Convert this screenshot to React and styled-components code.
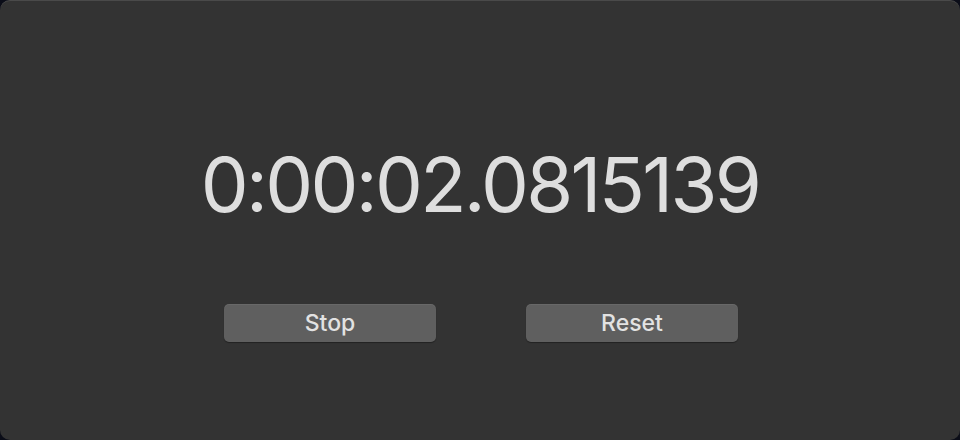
import React from 'react';
import styled, { createGlobalStyle } from 'styled-components';

const GlobalStyle = createGlobalStyle`
  html, body {
    margin: 0;
    padding: 0;
    background: #0b0d18;
  }
  #root {
    width: 960px;
    height: 440px;
  }
`;

const Window = styled.div`
  box-sizing: border-box;
  width: 960px;
  height: 440px;
  background-color: #333333;
  border-radius: 10px;
  border-top: 1px solid #4a4a4a;
  display: flex;
  flex-direction: column;
  align-items: center;
  padding-top: 138px;
  font-family: Inter, "Liberation Sans", sans-serif;
`;

const Time = styled.div`
  font-size: 76px;
  line-height: 90px;
  color: #dedede;
  letter-spacing: -2.7px;
`;

const Buttons = styled.div`
  display: flex;
  gap: 90px;
  margin-top: 75px;
  margin-left: 2px;
`;

const Button = styled.button`
  box-sizing: border-box;
  width: 212px;
  height: 38px;
  background-color: #5f5f5f;
  border: none;
  border-radius: 5px;
  box-shadow: 0 1px 1px rgba(0, 0, 0, 0.35), inset 0 1px 0 rgba(255, 255, 255, 0.06);
  color: #e2e2e2;
  font-family: Inter, "Liberation Sans", sans-serif;
  font-size: 23px;
  font-weight: 500;
  padding: 0;
  cursor: pointer;
`;

const Stopwatch = () => {
  return (
    <>
      <GlobalStyle />
      <Window>
        <Time>0:00:02.0815139</Time>
        <Buttons>
          <Button>Stop</Button>
          <Button>Reset</Button>
        </Buttons>
      </Window>
    </>
  );
};

export default Stopwatch;
